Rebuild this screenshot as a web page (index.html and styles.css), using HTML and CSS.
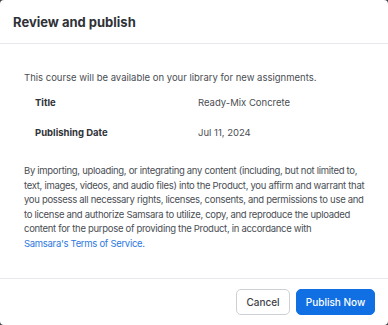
FILE: index.html
```html
<!DOCTYPE html>
<html>
<head>
<meta charset="utf-8">
<link rel="stylesheet" href="styles.css">
</head>
<body>
<div class="modal">
  <header class="modal-header">
    <h1 class="modal-title">Review and publish</h1>
  </header>
  <section class="modal-body">
    <p class="intro">This course will be available on your library for new assignments.</p>
    <div class="details">
      <div class="label">Title</div>
      <div class="value">Ready-Mix Concrete</div>
      <div class="label">Publishing Date</div>
      <div class="value">Jul 11, 2024</div>
    </div>
    <p class="legal">By importing, uploading, or integrating any content (including, but not limited to, text, images, videos, and audio files) into the Product, you affirm and warrant that you possess all necessary rights, licenses, consents, and permissions to use and to license and authorize Samsara to utilize, copy, and reproduce the uploaded content for the purpose of providing the Product, in accordance with <a class="link" href="#">Samsara's Terms of Service.</a></p>
  </section>
  <footer class="modal-footer">
    <button class="btn btn-secondary">Cancel</button>
    <button class="btn btn-primary">Publish Now</button>
  </footer>
</div>
</body>
</html>
```

FILE: styles.css
```css
html, body {
  margin: 0;
  padding: 0;
  height: 100%;
}
body {
  background: #3a3d42;
  font-family: "Inter", "Noto Sans", sans-serif;
}
.modal {
  box-sizing: border-box;
  width: 388px;
  height: 325px;
  background: #ffffff;
  border-radius: 4px;
  display: flex;
  flex-direction: column;
  overflow: hidden;
}
.modal-header {
  height: 43px;
  border-bottom: 1px solid #e6e8eb;
  display: flex;
  align-items: center;
  padding: 0 13px;
  flex-shrink: 0;
}
.modal-title {
  margin: 0;
  font-size: 13px;
  font-weight: 700;
  color: #2f3237;
  padding-top: 1px;
}
.modal-body {
  flex: 1;
  padding: 27px 14px 0 24px;
  color: #4a4e54;
  font-size: 9.5px;
}
.intro {
  margin: 0;
  line-height: 14px;
}
.details {
  display: grid;
  grid-template-columns: 163px 1fr;
  row-gap: 16px;
  padding: 11px 0 0 11px;
  line-height: 14px;
}
.label {
  font-weight: 700;
  color: #2f3237;
}
.value {
  color: #4a4e54;
}
.legal {
  margin: 24px 0 0 0;
  line-height: 14.6px;
  letter-spacing: -0.3px;
}
.link {
  color: #2c79e0;
  text-decoration: none;
  white-space: nowrap;
}
.modal-footer {
  height: 46px;
  border-top: 1px solid #e6e8eb;
  display: flex;
  justify-content: flex-end;
  align-items: center;
  gap: 6px;
  padding: 0 13px 0 0;
  flex-shrink: 0;
}
.btn {
  font-family: inherit;
  font-size: 10px;
  font-weight: 500;
  height: 26px;
  border-radius: 5px;
  padding: 0;
  cursor: pointer;
}
.btn-secondary {
  background: #ffffff;
  border: 1px solid #cdd1d6;
  color: #3d4146;
  width: 54px;
}
.btn-primary {
  background: #0f6fe3;
  border: 1px solid #0f6fe3;
  color: #ffffff;
  width: 79px;
}
```
